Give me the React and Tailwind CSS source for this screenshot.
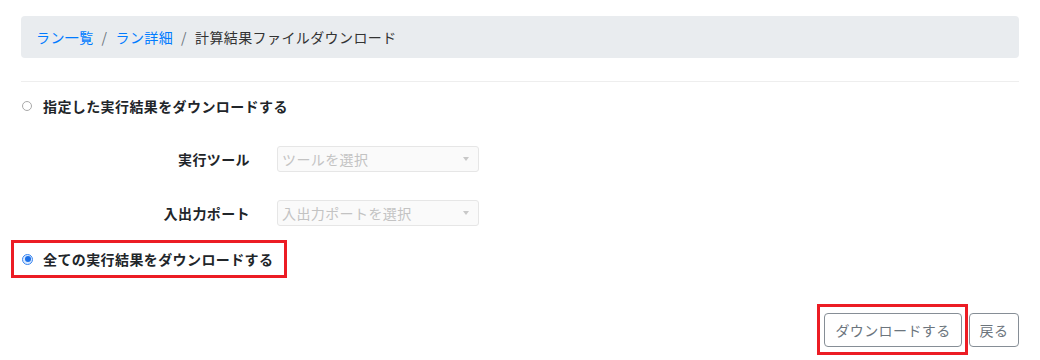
import React from 'react'

const font = { fontFamily: '"Noto Sans CJK JP", "Noto Sans", sans-serif' }

function Radio({ checked }) {
  return checked ? (
    <span className="w-[11px] h-[11px] rounded-full border border-[#3a86f0] bg-[#d9e9ff] flex items-center justify-center">
      <span className="w-[6px] h-[6px] rounded-full bg-[#1a6fe8]" />
    </span>
  ) : (
    <span className="w-[10px] h-[10px] rounded-full border border-[#a9a9a9] bg-white" />
  )
}

function Select({ placeholder }) {
  return (
    <div className="w-[202px] h-[26px] rounded-[3px] border border-[#e6e6e6] bg-[#fafafa] flex items-center justify-between pl-[4px] pr-[9px]">
      <span className="text-[14px] text-[#c3c3c3] leading-none">{placeholder}</span>
      <span className="w-0 h-0 border-l-[3px] border-r-[3px] border-t-[4px] border-l-transparent border-r-transparent border-t-[#c8c8c8]" />
    </div>
  )
}

export default function App() {
  return (
    <div className="w-[1040px] h-[360px] bg-white px-[21px] pt-[16px] text-[#212529] tracking-[0.4px]" style={font}>
      <nav className="h-[42px] rounded-[4px] bg-[#e9ecef] flex items-center px-[15px] text-[14px]">
        <span className="text-[#007bff]">ラン一覧</span>
        <span className="text-[#6c757d] px-[8px]">/</span>
        <span className="text-[#007bff]">ラン詳細</span>
        <span className="text-[#6c757d] px-[8px]">/</span>
        <span className="text-[#333]">計算結果ファイルダウンロード</span>
      </nav>

      <div className="mt-[23px] border-t border-[#eeeeee]" />

      <div className="mt-[14px] h-[20px] flex items-center gap-[11px] pl-[1px]">
        <Radio />
        <span className="text-[14px] font-bold">指定した実行結果をダウンロードする</span>
      </div>

      <div className="mt-[30px] flex flex-col gap-[28px]">
        <div className="flex items-center">
          <span className="w-[229px] text-right text-[14px] font-bold">実行ツール</span>
          <span className="ml-[27px]"><Select placeholder="ツールを選択" /></span>
        </div>
        <div className="flex items-center">
          <span className="w-[229px] text-right text-[14px] font-bold">入出力ポート</span>
          <span className="ml-[27px]"><Select placeholder="入出力ポートを選択" /></span>
        </div>
      </div>

      <div className="-ml-[10px] mt-[14px] w-[276px] h-[38px] border-[3px] border-[#ec1c24] flex items-center gap-[10px] pl-[8px]">
        <Radio checked />
        <span className="text-[14px] font-bold">全ての実行結果をダウンロードする</span>
      </div>

      <div className="mt-[26px] flex justify-end items-start">
        <div className="border-[3px] border-[#ec1c24] pt-[6px] pb-[5px] pl-[4px] pr-[3px]">
          <button className="w-[138px] h-[34px] rounded-[4px] border border-[#868e96] text-[#6c757d] text-[14px] bg-white">ダウンロードする</button>
        </div>
        <button className="mt-[9px] ml-[1px] w-[50px] h-[34px] rounded-[4px] border border-[#868e96] text-[#6c757d] text-[14px] bg-white">戻る</button>
      </div>
    </div>
  )
}
